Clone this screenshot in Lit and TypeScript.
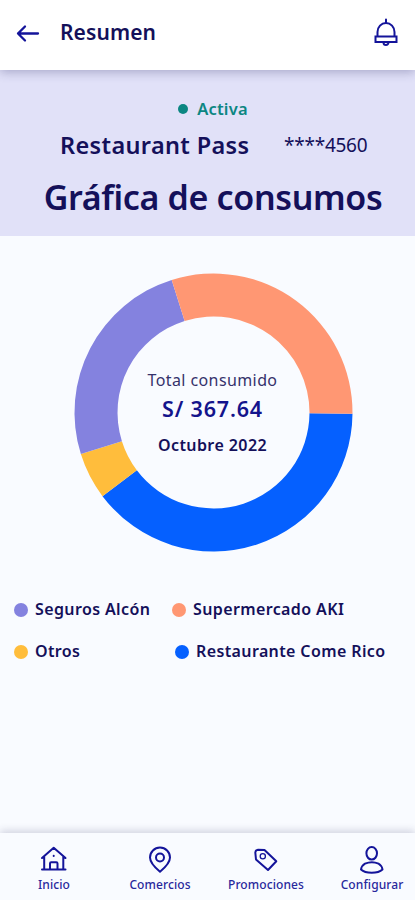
import { LitElement, html, svg, css } from "lit";
import { customElement } from "lit/decorators.js";

interface Slice { color: string; from: number; to: number }

const CX = 138.5, CY = 139.5, OUTER = 139, INNER = 96;
// Angles in degrees, clockwise from three o'clock.
const slices: Slice[] = [
  { color: "#0560ff", from: 0.5, to: 143 },
  { color: "#ffbd3c", from: 143, to: 162.6 },
  { color: "#8482df", from: 162.6, to: 252.5 },
  { color: "#ff9773", from: 252.5, to: 360.5 },
];

function ring({ from, to }: Slice): string {
  const p = (r: number, a: number) => {
    const t = (a * Math.PI) / 180;
    return `${(CX + r * Math.cos(t)).toFixed(2)} ${(CY + r * Math.sin(t)).toFixed(2)}`;
  };
  return `M${p(OUTER, from)}A${OUTER} ${OUTER} 0 0 1 ${p(OUTER, to)}L${p(INNER, to)}A${INNER} ${INNER} 0 0 0 ${p(INNER, from)}Z`;
}

@customElement("app-root")
export class AppRoot extends LitElement {
  static styles = css`
    :host {
      display: flex;
      flex-direction: column;
      width: 415px;
      height: 900px;
      overflow: hidden;
      background: #f9fbff;
      color: #14105a;
      font-family: "Noto Sans", "Open Sans", sans-serif;
      font-weight: 600;
    }
    * { box-sizing: border-box; }
    span, h1 { white-space: nowrap; margin: 0; }
    svg { display: block; flex: none; overflow: visible; fill: none; stroke: #14149a; stroke-width: 2; stroke-linecap: round; stroke-linejoin: round; }
    .top { display: flex; align-items: center; height: 70px; flex: none; background: #fff; padding: 0 16px 5px 16px; z-index: 1; box-shadow: 0 2px 10px rgba(40, 40, 100, 0.32); }
    .title { font-size: 21px; line-height: 30px; margin: -2px 0 0 19px; letter-spacing: 0.1px; }
    .bell { margin-left: auto; stroke-linejoin: miter; }
    .hero { flex: none; height: 166px; background: #e1e1f8; display: flex; flex-direction: column; align-items: center; padding-top: 26px; }
    .status { display: flex; align-items: center; gap: 9px; height: 24px; color: #0b8682; padding-left: 11px; }
    .status i { width: 10px; height: 10px; border-radius: 50%; background: #0b8682; margin-top: 2px; }
    .active { font-size: 16.5px; letter-spacing: 0.2px; }
    .card { display: flex; align-items: center; align-self: stretch; height: 32px; margin-top: 9px; padding-left: 60px; }
    .name { font-size: 23.5px; width: 224px; letter-spacing: 0.35px; }
    .number { font-size: 19px; font-weight: 400; letter-spacing: -0.25px; }
    .heading { font-size: 34px; font-weight: 600; letter-spacing: -0.35px; line-height: 46px; margin-top: 13px; padding-left: 11px; }
    .chart { flex: none; position: relative; width: 278px; height: 279px; margin: 37px 0 0 75px; }
    .chart svg { stroke: none; }
    .total { position: absolute; inset: 0; display: flex; flex-direction: column; align-items: center; padding: 94px 3px 0 0; }
    .label { font-size: 16px; line-height: 26px; font-weight: 400; color: #35326b; letter-spacing: 0.4px; }
    .amount { font-size: 21.5px; line-height: 30px; color: #14148c; letter-spacing: 0.85px; margin-top: 1px; }
    .month { font-size: 16px; line-height: 24px; margin-top: 9px; letter-spacing: 0.42px; }
    .legend { display: grid; grid-template-columns: 158px auto; row-gap: 18px; padding: 45px 0 0 14px; }
    .entry { display: flex; align-items: center; gap: 7px; height: 24px; font-size: 16px; letter-spacing: 0.38px; }
    .shift { padding-left: 3px; }
    .dot { flex: none; width: 14px; height: 14px; border-radius: 50%; margin-top: 2px; }
    .nav { margin-top: auto; height: 67px; flex: none; display: grid; grid-template-columns: repeat(4, 106px); padding-left: 1px; box-shadow: 0 -2px 8px rgba(40, 40, 90, 0.2); background: #f9fbff; }
    .tab { display: flex; flex-direction: column; align-items: center; padding-top: 10px; color: #28289c; font-size: 12px; font-weight: 500; line-height: 16px; letter-spacing: 0.1px; }
    .tab svg { margin-bottom: 2px; }
  `;

  render() {
    const entry = (name: string, color: string, shift = false) => html`
      <div class="entry ${shift ? "shift" : ""}"><div class="dot" style="background:${color}"></div><span>${name}</span></div>`;
    return html`
      <div class="top">
        <svg width="25" height="24" viewBox="0 0 25 24"><path d="M22 12.500H2M9 5.500L2 12.500L9 19.500" stroke-width="2.300" /></svg>
        <span class="title">Resumen</span>
        <svg class="bell" width="26" height="30" viewBox="0 0 26 30"><path d="M13 1.500V5M4.500 18V14A8.500 9 0 0 1 21.500 14V18M2.500 18.500H23.500V24H2.500ZM10.500 24.500A2.500 2.500 0 0 0 15.500 24.500" /></svg>
      </div>
      <div class="hero">
        <div class="status"><i></i><span class="active">Activa</span></div>
        <div class="card"><span class="name">Restaurant Pass</span><span class="number">****4560</span></div>
        <h1 class="heading">Gráfica de consumos</h1>
      </div>
      <div class="chart">
        <svg width="278" height="279" viewBox="0 0 278 279">${slices.map((s) => svg`<path d=${ring(s)} fill=${s.color} />`)}</svg>
        <div class="total">
          <span class="label">Total consumido</span>
          <span class="amount">S/ 367.64</span>
          <span class="month">Octubre 2022</span>
        </div>
      </div>
      <div class="legend">
        ${entry("Seguros Alcón", "#8482df")}${entry("Supermercado AKI", "#ff9773")}
        ${entry("Otros", "#ffbd3c")}${entry("Restaurante Come Rico", "#0560ff", true)}
      </div>
      <div class="nav">
        <div class="tab">
          <svg width="28" height="32" viewBox="0 0 28 32"><path d="M2 15L13.700 4.800L25.500 15M4.200 13.500V26.500M23.300 13.500V26.500M2 26.500H25.500M10 26V20.500Q10 19.300 11.200 19.300H16.300Q17.500 19.300 17.500 20.500V26M13.700 12.800V13" /></svg>
          <span>Inicio</span>
        </div>
        <div class="tab">
          <svg width="28" height="32" viewBox="0 0 28 32"><path d="M14 28.700C9.500 25 4 20 4 14.500A10 10 0 0 1 24 14.500C24 20 18.500 25 14 28.700Z" /><circle cx="14" cy="14.500" r="4" /></svg>
          <span>Comercios</span>
        </div>
        <div class="tab">
          <svg width="28" height="32" viewBox="0 0 28 32"><path d="M3.300 9.500Q3.600 7 6 6.700L12.500 7L24.300 18.300L16 27L4 16.500Z" /><circle cx="10.800" cy="13.200" r="2.600" stroke-width="1.300" /></svg>
          <span>Promociones</span>
        </div>
        <div class="tab">
          <svg width="28" height="32" viewBox="0 0 28 32"><ellipse cx="13.700" cy="10.300" rx="5.300" ry="6.300" /><path d="M7 20.700Q14 17.700 20.500 20.700Q23.800 22.500 24.500 26.500Q21 29.800 13.700 29.800Q6.500 29.800 3 26.500Q3.700 22.500 7 20.700Z" /></svg>
          <span>Configurar</span>
        </div>
      </div>`;
  }
}
